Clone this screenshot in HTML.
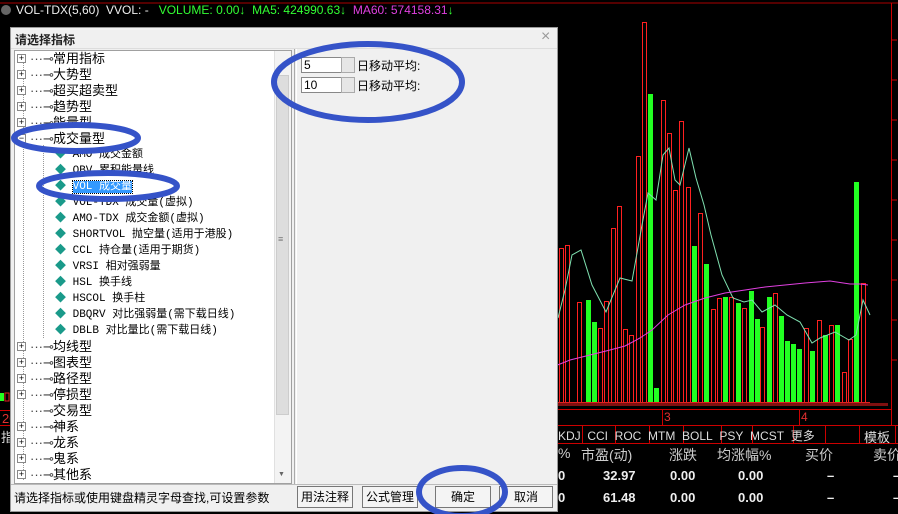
<!DOCTYPE html>
<html><head><meta charset="utf-8"><style>
*{margin:0;padding:0;box-sizing:border-box}
body{width:898px;height:514px;background:#000;position:relative;overflow:hidden;font-family:"Liberation Sans","Noto Sans CJK SC",sans-serif;font-size:12px}
.a{position:absolute;white-space:nowrap}
.dlg{position:absolute;left:10px;top:27px;width:548px;height:485px;background:#f0f0f0;border:1px solid #9a9a9a}
.tree{position:absolute;left:3px;top:22px;width:278px;height:434px;background:#fff;border:1px solid #a0a0a0}
.row{position:absolute;left:0;height:16px;line-height:16px;font-size:13px;color:#000}
.pl{position:absolute;width:9px;height:9px;border:1px solid #888;background:#fff;font-size:9px;line-height:7px;text-align:center;color:#000}
.btn{position:absolute;top:458px;height:22px;border:1px solid #777;background:#f4f4f4;text-align:center;line-height:20px;font-size:12px}
.mono{font-family:"Liberation Mono","Noto Sans CJK SC",monospace;font-size:11px}
.d{position:absolute;color:#eee;font-size:13px;font-weight:bold;white-space:nowrap}
.h{position:absolute;color:#ccc;font-size:14px;white-space:nowrap}
</style></head><body>
<svg class="a" style="left:0;top:0" width="898" height="514">
<line x1="0" y1="3" x2="898" y2="3" stroke="#a00" stroke-width="1"/>
<line x1="891.5" y1="3" x2="891.5" y2="425" stroke="#c00"/>
<g stroke="#c00"><line x1="891" y1="40" x2="897" y2="40"/><line x1="891" y1="80" x2="897" y2="80"/><line x1="891" y1="120" x2="897" y2="120"/><line x1="891" y1="160" x2="897" y2="160"/><line x1="891" y1="200" x2="897" y2="200"/><line x1="891" y1="240" x2="897" y2="240"/><line x1="891" y1="280" x2="897" y2="280"/><line x1="891" y1="320" x2="897" y2="320"/><line x1="891" y1="360" x2="897" y2="360"/></g>
<g fill="none" stroke="#ff2020" stroke-width="1">
<rect x="559.5" y="248.5" width="4" height="154"/><rect x="565.5" y="245.5" width="4" height="157"/><rect x="577.5" y="302.5" width="4" height="100"/><rect x="598.5" y="328.5" width="4" height="74"/><rect x="604.5" y="301.5" width="4" height="101"/><rect x="611.5" y="228.5" width="4" height="174"/><rect x="617.5" y="206.5" width="4" height="196"/><rect x="623.5" y="329.5" width="4" height="73"/><rect x="629.5" y="335.5" width="4" height="67"/><rect x="636.5" y="156.5" width="4" height="246"/><rect x="642.5" y="22.5" width="4" height="380"/><rect x="661.5" y="100.5" width="4" height="302"/><rect x="667.5" y="133.5" width="4" height="269"/><rect x="673.5" y="190.5" width="4" height="212"/><rect x="679.5" y="121.5" width="4" height="281"/><rect x="686.5" y="187.5" width="4" height="215"/><rect x="698.5" y="213.5" width="4" height="189"/><rect x="711.5" y="309.5" width="4" height="93"/><rect x="717.5" y="298.5" width="4" height="104"/><rect x="729.5" y="297.5" width="4" height="105"/><rect x="742.5" y="308.5" width="4" height="94"/><rect x="760.5" y="327.5" width="4" height="75"/><rect x="773.5" y="293.5" width="4" height="109"/><rect x="804.5" y="328.5" width="4" height="74"/><rect x="817.5" y="320.5" width="4" height="82"/><rect x="829.5" y="325.5" width="4" height="77"/><rect x="842.5" y="372.5" width="4" height="30"/><rect x="848.5" y="339.5" width="4" height="63"/><rect x="861.5" y="283.5" width="4" height="119"/>
</g>
<g fill="#22ff22">
<rect x="586" y="300" width="5" height="102"/><rect x="592" y="322" width="5" height="80"/><rect x="648" y="94" width="5" height="308"/><rect x="654" y="388" width="5" height="14"/><rect x="692" y="246" width="5" height="156"/><rect x="704" y="264" width="5" height="138"/><rect x="723" y="297" width="5" height="105"/><rect x="736" y="303" width="5" height="99"/><rect x="749" y="291" width="5" height="111"/><rect x="755" y="319" width="5" height="83"/><rect x="767" y="297" width="5" height="105"/><rect x="779" y="316" width="5" height="86"/><rect x="785" y="341" width="5" height="61"/><rect x="791" y="344" width="5" height="58"/><rect x="797" y="349" width="5" height="53"/><rect x="810" y="351" width="5" height="51"/><rect x="823" y="335" width="5" height="67"/><rect x="835" y="325" width="5" height="77"/><rect x="854" y="182" width="5" height="220"/>
</g>
<line x1="555" y1="402.5" x2="870" y2="402.5" stroke="#e02020"/>
<polyline fill="none" stroke="#7fe0b0" stroke-width="1" points="558,318 565,290 572,255 581,250 592,285 606,312 620,278 632,281 642,225 648,193 656,200 663,155 669,148 675,180 680,185 689,148 696,178 704,205 711,235 722,275 733,298 744,302 752,300 762,312 775,305 787,315 800,322 812,343 820,338 835,332 849,340 856,335 863,300 870,315"/>
<polyline fill="none" stroke="#e040e0" stroke-width="1" points="555,366 570,360 590,355 610,350 625,346 640,338 652,330 668,315 685,305 705,298 725,293 745,290 765,287 785,285 805,283 830,281 850,284 860,284 868,285"/>
<g stroke="#c00"><line x1="555" y1="409.5" x2="891" y2="409.5"/><line x1="555" y1="425.5" x2="898" y2="425.5"/><line x1="555" y1="443.5" x2="898" y2="443.5"/><line x1="662.5" y1="409" x2="662.5" y2="425"/><line x1="799.5" y1="409" x2="799.5" y2="425"/>
<line x1="582.5" y1="426" x2="582.5" y2="443"/><line x1="615.5" y1="426" x2="615.5" y2="443"/><line x1="649.5" y1="426" x2="649.5" y2="443"/><line x1="683.5" y1="426" x2="683.5" y2="443"/><line x1="721.5" y1="426" x2="721.5" y2="443"/><line x1="752.5" y1="426" x2="752.5" y2="443"/><line x1="793.5" y1="426" x2="793.5" y2="443"/><line x1="825.5" y1="426" x2="825.5" y2="443"/><line x1="859.5" y1="426" x2="859.5" y2="443"/><line x1="895.5" y1="426" x2="895.5" y2="443"/></g>
<rect x="558" y="403" width="330" height="3" fill="#801010"/>
<rect x="0" y="393" width="4" height="8" fill="#22ff22"/><rect x="5" y="393" width="4" height="8" fill="none" stroke="#e02020"/>
<line x1="0" y1="410.5" x2="10" y2="410.5" stroke="#c00"/><line x1="0" y1="425.5" x2="10" y2="425.5" stroke="#c00"/>
<circle cx="6" cy="10" r="5" fill="#666"/>
</svg>
<div class="a" style="left:16px;top:3px;color:#eee;font-size:12px">VOL-TDX(5,60)&nbsp; VVOL: -&nbsp;&nbsp; <span style="color:#3f3">VOLUME: 0.00↓&nbsp; MA5: 424990.63↓</span>&nbsp; <span style="color:#e040e0">MA60: 574158.31</span><span style="color:#3f3">↓</span></div>
<div class="a" style="left:664px;top:410px;color:#e03030;font-size:12px">3</div>
<div class="a" style="left:801px;top:410px;color:#e03030;font-size:12px">4</div>
<div class="a" style="left:2px;top:411px;color:#e03030;font-size:13px">20</div>
<div class="a" style="left:1px;top:427px;color:#ddd;font-size:13px">指</div>
<div class="a" style="left:558px;top:427px;color:#ddd;font-size:12px">KDJ&nbsp; CCI&nbsp; ROC&nbsp; MTM&nbsp; BOLL&nbsp; PSY&nbsp; MCST&nbsp; 更多</div>
<div class="a" style="left:864px;top:427px;color:#ddd;font-size:13px">模板</div>
<div class="h" style="left:558px;top:445px">%</div>
<div class="h" style="left:581px;top:445px">市盈(动)</div>
<div class="h" style="left:669px;top:445px">涨跌</div>
<div class="h" style="left:717px;top:445px">均涨幅%</div>
<div class="h" style="left:805px;top:445px">买价</div>
<div class="h" style="left:873px;top:445px">卖价</div>
<div class="d" style="left:558px;top:468px">0</div><div class="d" style="left:603px;top:468px">32.97</div><div class="d" style="left:670px;top:468px">0.00</div><div class="d" style="left:738px;top:468px">0.00</div><div class="d" style="left:827px;top:468px">–</div><div class="d" style="left:893px;top:468px">–</div>
<div class="d" style="left:558px;top:490px">0</div><div class="d" style="left:603px;top:490px">61.48</div><div class="d" style="left:670px;top:490px">0.00</div><div class="d" style="left:738px;top:490px">0.00</div><div class="d" style="left:827px;top:490px">–</div><div class="d" style="left:893px;top:490px">–</div>

<div class="dlg">
<div class="a" style="left:4px;top:3px;font-size:12px;font-weight:bold;color:#222">请选择指标</div>
<div class="a" style="left:530px;top:0px;font-size:16px;color:#999">×</div>
<div class="a" style="left:0;top:20px;width:546px;height:1px;background:#ddd"></div>
<div class="tree">
<svg class="a" style="left:0;top:0" width="262" height="432">
<g stroke="#999" stroke-dasharray="1,1"><line x1="8.5" y1="4" x2="8.5" y2="430"/><line x1="28.5" y1="94" x2="28.5" y2="288"/></g>
</svg>
<div class="a" style="left:259px;top:0;width:17px;height:432px;background:#f3f3f3;border-left:1px solid #e0e0e0"></div>
<div class="a" style="left:261px;top:24px;width:13px;height:340px;background:#ddd;border:1px solid #ccc"></div>
<div class="a" style="left:263px;top:183px;font-size:9px;color:#777">≡</div>
<div class="a" style="left:263px;top:420px;font-size:7px;color:#666">▼</div>
</div>
<div class="a" style="left:283px;top:21px;width:1px;height:436px;background:#aaa"></div>
<div class="a" style="left:285px;top:21px;width:1px;height:436px;background:#fff"></div>
<div class="a" style="left:0;top:456px;width:546px;height:1px;background:#bbb"></div>
<div class="a" style="left:3px;top:461px;font-size:12px;color:#000">请选择指标或使用键盘精灵字母查找,可设置参数</div>
<div class="a" style="left:290px;top:29px;width:44px;height:16px;background:#fff;border:1px solid #888;font-size:12px;line-height:14px;padding-left:2px">5</div>
<div class="a" style="left:330px;top:29px;width:14px;height:16px;background:#e6e6e6;border:1px solid #aaa"></div>
<div class="a" style="left:346px;top:29px;font-size:12px">日移动平均:</div>
<div class="a" style="left:290px;top:49px;width:44px;height:16px;background:#fff;border:1px solid #888;font-size:12px;line-height:14px;padding-left:2px">10</div>
<div class="a" style="left:330px;top:49px;width:14px;height:16px;background:#e6e6e6;border:1px solid #aaa"></div>
<div class="a" style="left:346px;top:49px;font-size:12px">日移动平均:</div>
<div class="btn" style="left:286px;width:56px">用法注释</div>
<div class="btn" style="left:351px;width:56px">公式管理</div>
<div class="btn" style="left:424px;width:56px">确定</div>
<div class="btn" style="left:488px;width:54px">取消</div>
</div>

<div class="a" style="left:13px;top:50px;width:262px;height:434px;font-size:12px">
<div class="row" style="top:1px"><span class="pl" style="left:4px;top:3px">+</span><span style="position:absolute;left:17px;color:#444">···⊸</span><span style="position:absolute;left:40px">常用指标</span></div>
<div class="row" style="top:17px"><span class="pl" style="left:4px;top:3px">+</span><span style="position:absolute;left:17px;color:#444">···⊸</span><span style="position:absolute;left:40px">大势型</span></div>
<div class="row" style="top:33px"><span class="pl" style="left:4px;top:3px">+</span><span style="position:absolute;left:17px;color:#444">···⊸</span><span style="position:absolute;left:40px">超买超卖型</span></div>
<div class="row" style="top:49px"><span class="pl" style="left:4px;top:3px">+</span><span style="position:absolute;left:17px;color:#444">···⊸</span><span style="position:absolute;left:40px">趋势型</span></div>
<div class="row" style="top:65px"><span class="pl" style="left:4px;top:3px">+</span><span style="position:absolute;left:17px;color:#444">···⊸</span><span style="position:absolute;left:40px">能量型</span></div>
<div class="row" style="top:81px"><span class="pl" style="left:4px;top:3px">−</span><span style="position:absolute;left:17px;color:#444">···⊸</span><span style="position:absolute;left:40px">成交量型</span></div>
<div class="row mono" style="top:97px;left:42px"><span style="color:#1a9a8a">◆</span> AMO 成交金额</div>
<div class="row mono" style="top:113px;left:42px"><span style="color:#1a9a8a">◆</span> OBV 累积能量线</div>
<div class="row mono" style="top:129px;left:42px"><span style="color:#1a9a8a">◆</span> <span style="background:#3399ff;color:#fff;outline:1px dotted #000">VOL 成交量</span></div>
<div class="row mono" style="top:145px;left:42px"><span style="color:#1a9a8a">◆</span> VOL-TDX 成交量(虚拟)</div>
<div class="row mono" style="top:161px;left:42px"><span style="color:#1a9a8a">◆</span> AMO-TDX 成交金额(虚拟)</div>
<div class="row mono" style="top:177px;left:42px"><span style="color:#1a9a8a">◆</span> SHORTVOL 抛空量(适用于港股)</div>
<div class="row mono" style="top:193px;left:42px"><span style="color:#1a9a8a">◆</span> CCL 持仓量(适用于期货)</div>
<div class="row mono" style="top:209px;left:42px"><span style="color:#1a9a8a">◆</span> VRSI 相对强弱量</div>
<div class="row mono" style="top:225px;left:42px"><span style="color:#1a9a8a">◆</span> HSL 换手线</div>
<div class="row mono" style="top:241px;left:42px"><span style="color:#1a9a8a">◆</span> HSCOL 换手柱</div>
<div class="row mono" style="top:257px;left:42px"><span style="color:#1a9a8a">◆</span> DBQRV 对比强弱量(需下载日线)</div>
<div class="row mono" style="top:273px;left:42px"><span style="color:#1a9a8a">◆</span> DBLB 对比量比(需下载日线)</div>
<div class="row" style="top:289px"><span class="pl" style="left:4px;top:3px">+</span><span style="position:absolute;left:17px;color:#444">···⊸</span><span style="position:absolute;left:40px">均线型</span></div>
<div class="row" style="top:305px"><span class="pl" style="left:4px;top:3px">+</span><span style="position:absolute;left:17px;color:#444">···⊸</span><span style="position:absolute;left:40px">图表型</span></div>
<div class="row" style="top:321px"><span class="pl" style="left:4px;top:3px">+</span><span style="position:absolute;left:17px;color:#444">···⊸</span><span style="position:absolute;left:40px">路径型</span></div>
<div class="row" style="top:337px"><span class="pl" style="left:4px;top:3px">+</span><span style="position:absolute;left:17px;color:#444">···⊸</span><span style="position:absolute;left:40px">停损型</span></div>
<div class="row" style="top:353px"><span style="position:absolute;left:17px;color:#444">···⊸</span><span style="position:absolute;left:40px">交易型</span></div>
<div class="row" style="top:369px"><span class="pl" style="left:4px;top:3px">+</span><span style="position:absolute;left:17px;color:#444">···⊸</span><span style="position:absolute;left:40px">神系</span></div>
<div class="row" style="top:385px"><span class="pl" style="left:4px;top:3px">+</span><span style="position:absolute;left:17px;color:#444">···⊸</span><span style="position:absolute;left:40px">龙系</span></div>
<div class="row" style="top:401px"><span class="pl" style="left:4px;top:3px">+</span><span style="position:absolute;left:17px;color:#444">···⊸</span><span style="position:absolute;left:40px">鬼系</span></div>
<div class="row" style="top:417px"><span class="pl" style="left:4px;top:3px">+</span><span style="position:absolute;left:17px;color:#444">···⊸</span><span style="position:absolute;left:40px">其他系</span></div>
</div>

<svg class="a" style="left:0;top:0" width="898" height="514">
<g fill="none" stroke="#3553c8" stroke-width="6">
<ellipse cx="368" cy="82" rx="94" ry="38"/>
<ellipse cx="76" cy="138" rx="62" ry="13"/>
<ellipse cx="108" cy="186" rx="69" ry="13"/>
<ellipse cx="462" cy="492" rx="43" ry="24"/>
</g>
</svg>
</body></html>
